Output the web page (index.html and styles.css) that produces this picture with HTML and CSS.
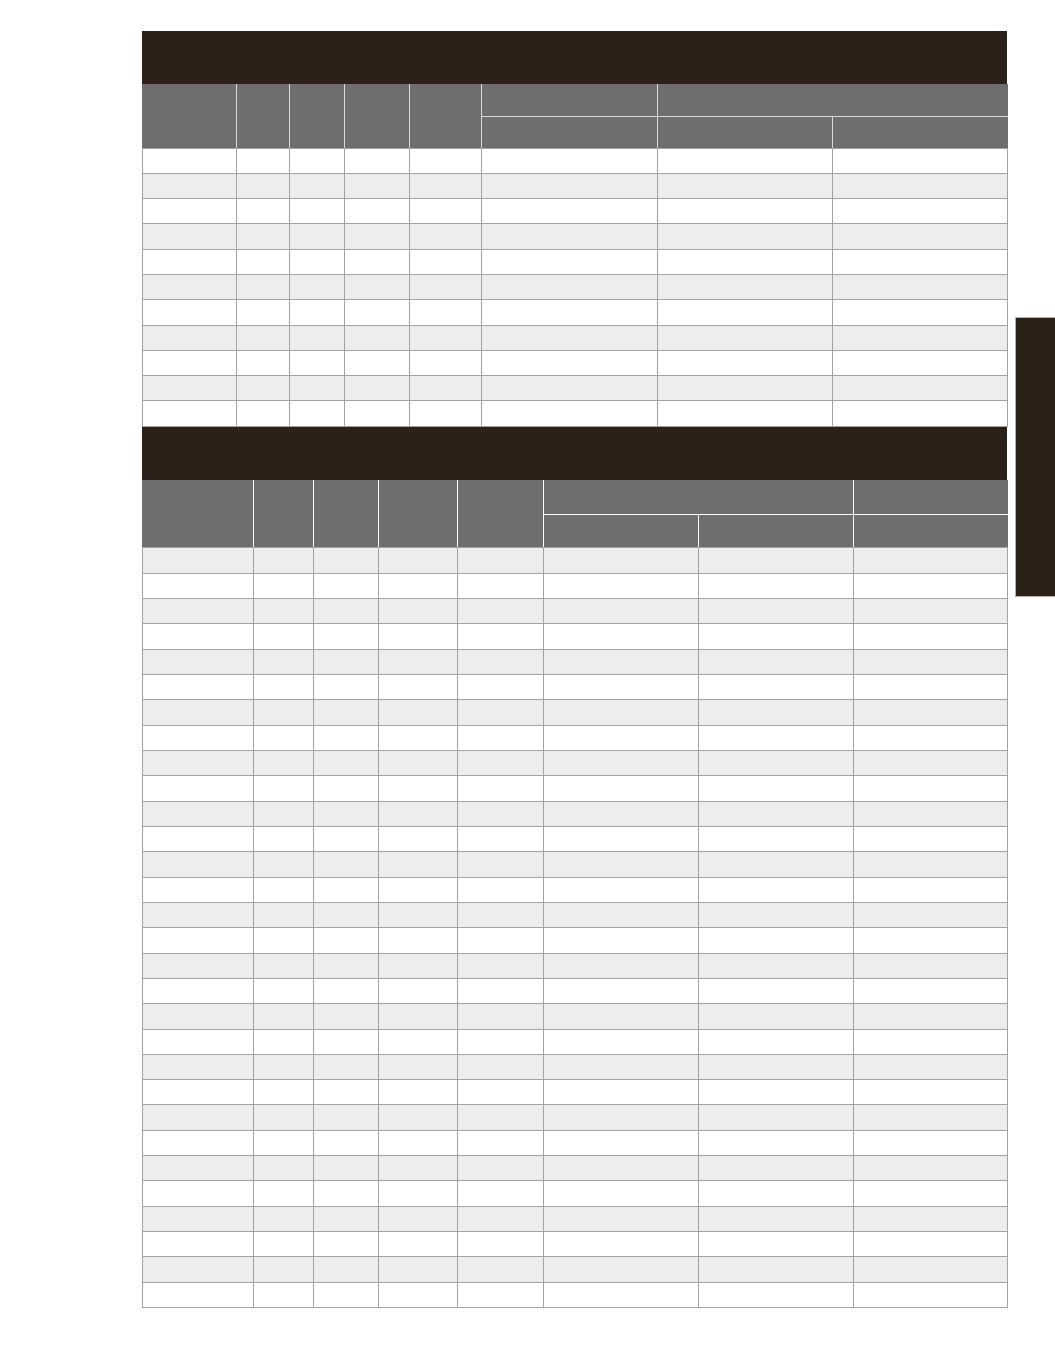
FILE: index.html
```html
<!DOCTYPE html>
<html>
<head>
<meta charset="utf-8">
<link rel="stylesheet" href="styles.css">
</head>
<body>
<div class="page">
  <main class="content">
    <section class="block block-one">
      <div class="band"></div>
      <table class="grid grid-one">
        <colgroup>
          <col class="w94"><col class="w53"><col class="w55"><col class="w65"><col class="w72"><col class="w176"><col class="w175"><col class="w175">
        </colgroup>
        <thead>
          <tr class="h1">
            <th rowspan="2"></th><th rowspan="2"></th><th rowspan="2"></th><th rowspan="2"></th><th rowspan="2"></th>
            <th></th><th colspan="2"></th>
          </tr>
          <tr class="h2">
            <th></th><th></th><th></th>
          </tr>
        </thead>
        <tbody>
          <tr class="plain"><td></td><td></td><td></td><td></td><td></td><td></td><td></td><td></td></tr>
          <tr class="alt"><td></td><td></td><td></td><td></td><td></td><td></td><td></td><td></td></tr>
          <tr class="plain"><td></td><td></td><td></td><td></td><td></td><td></td><td></td><td></td></tr>
          <tr class="alt"><td></td><td></td><td></td><td></td><td></td><td></td><td></td><td></td></tr>
          <tr class="plain"><td></td><td></td><td></td><td></td><td></td><td></td><td></td><td></td></tr>
          <tr class="alt"><td></td><td></td><td></td><td></td><td></td><td></td><td></td><td></td></tr>
          <tr class="plain"><td></td><td></td><td></td><td></td><td></td><td></td><td></td><td></td></tr>
          <tr class="alt"><td></td><td></td><td></td><td></td><td></td><td></td><td></td><td></td></tr>
          <tr class="plain"><td></td><td></td><td></td><td></td><td></td><td></td><td></td><td></td></tr>
          <tr class="alt"><td></td><td></td><td></td><td></td><td></td><td></td><td></td><td></td></tr>
          <tr class="plain"><td></td><td></td><td></td><td></td><td></td><td></td><td></td><td></td></tr>
        </tbody>
      </table>
    </section>
    <section class="block block-two">
      <div class="band band-two"></div>
      <table class="grid grid-two">
        <colgroup>
          <col class="w111"><col class="w60"><col class="w65"><col class="w79"><col class="w85"><col class="w155"><col class="w155"><col class="w154">
        </colgroup>
        <thead>
          <tr class="h1b">
            <th rowspan="2"></th><th rowspan="2"></th><th rowspan="2"></th><th rowspan="2"></th><th rowspan="2"></th>
            <th colspan="2"></th><th></th>
          </tr>
          <tr class="h2b">
            <th></th><th></th><th></th>
          </tr>
        </thead>
        <tbody>
          <tr class="alt"><td></td><td></td><td></td><td></td><td></td><td></td><td></td><td></td></tr>
          <tr class="plain"><td></td><td></td><td></td><td></td><td></td><td></td><td></td><td></td></tr>
          <tr class="alt"><td></td><td></td><td></td><td></td><td></td><td></td><td></td><td></td></tr>
          <tr class="plain"><td></td><td></td><td></td><td></td><td></td><td></td><td></td><td></td></tr>
          <tr class="alt"><td></td><td></td><td></td><td></td><td></td><td></td><td></td><td></td></tr>
          <tr class="plain"><td></td><td></td><td></td><td></td><td></td><td></td><td></td><td></td></tr>
          <tr class="alt"><td></td><td></td><td></td><td></td><td></td><td></td><td></td><td></td></tr>
          <tr class="plain"><td></td><td></td><td></td><td></td><td></td><td></td><td></td><td></td></tr>
          <tr class="alt"><td></td><td></td><td></td><td></td><td></td><td></td><td></td><td></td></tr>
          <tr class="plain"><td></td><td></td><td></td><td></td><td></td><td></td><td></td><td></td></tr>
          <tr class="alt"><td></td><td></td><td></td><td></td><td></td><td></td><td></td><td></td></tr>
          <tr class="plain"><td></td><td></td><td></td><td></td><td></td><td></td><td></td><td></td></tr>
          <tr class="alt"><td></td><td></td><td></td><td></td><td></td><td></td><td></td><td></td></tr>
          <tr class="plain"><td></td><td></td><td></td><td></td><td></td><td></td><td></td><td></td></tr>
          <tr class="alt"><td></td><td></td><td></td><td></td><td></td><td></td><td></td><td></td></tr>
          <tr class="plain"><td></td><td></td><td></td><td></td><td></td><td></td><td></td><td></td></tr>
          <tr class="alt"><td></td><td></td><td></td><td></td><td></td><td></td><td></td><td></td></tr>
          <tr class="plain"><td></td><td></td><td></td><td></td><td></td><td></td><td></td><td></td></tr>
          <tr class="alt"><td></td><td></td><td></td><td></td><td></td><td></td><td></td><td></td></tr>
          <tr class="plain"><td></td><td></td><td></td><td></td><td></td><td></td><td></td><td></td></tr>
          <tr class="alt"><td></td><td></td><td></td><td></td><td></td><td></td><td></td><td></td></tr>
          <tr class="plain"><td></td><td></td><td></td><td></td><td></td><td></td><td></td><td></td></tr>
          <tr class="alt"><td></td><td></td><td></td><td></td><td></td><td></td><td></td><td></td></tr>
          <tr class="plain"><td></td><td></td><td></td><td></td><td></td><td></td><td></td><td></td></tr>
          <tr class="alt"><td></td><td></td><td></td><td></td><td></td><td></td><td></td><td></td></tr>
          <tr class="plain"><td></td><td></td><td></td><td></td><td></td><td></td><td></td><td></td></tr>
          <tr class="alt"><td></td><td></td><td></td><td></td><td></td><td></td><td></td><td></td></tr>
          <tr class="plain"><td></td><td></td><td></td><td></td><td></td><td></td><td></td><td></td></tr>
          <tr class="alt"><td></td><td></td><td></td><td></td><td></td><td></td><td></td><td></td></tr>
          <tr class="plain"><td></td><td></td><td></td><td></td><td></td><td></td><td></td><td></td></tr>
        </tbody>
      </table>
    </section>
  </main>
  <aside class="side-tab"></aside>
</div>
</body>
</html>
```

FILE: styles.css
```css
html, body {
  margin: 0;
  padding: 0;
  background: #ffffff;
  font-family: "Liberation Sans", Arial, sans-serif;
}
.page {
  display: flex;
  align-items: flex-start;
  width: 1055px;
}
.content {
  margin-left: 142px;
  margin-top: 31px;
  width: 865px;
  display: flex;
  flex-direction: column;
}
.band {
  height: 53px;
  background: #2b2119;
}
.band-two {
  height: 53.5px;
}
.grid {
  width: 865px;
  table-layout: fixed;
  border-collapse: collapse;
  border-spacing: 0;
}
.grid th {
  background: #6f6d70;
  padding: 0;
  border: 1px solid #d9d9d9;
}
.grid-two th {
  border-color: #ffffff;
}
.grid thead tr:first-child th {
  border-top: none;
}
.grid th:first-child {
  border-left-color: #6f6d70;
}
.grid tr.h1 th:last-child,
.grid tr.h2 th:last-child,
.grid tr.h1b th:last-child,
.grid tr.h2b th:last-child {
  border-right-color: #6f6d70;
}
.grid tr.h2 th,
.grid tr.h2b th {
  border-bottom-color: #a3a3a3;
}
.grid tr.h1 th[rowspan],
.grid tr.h1b th[rowspan] {
  border-bottom-color: #a3a3a3;
}
.h1, .h2 { height: 32px; }
.h1b { height: 34px; }
.h2b { height: 33.5px; }
.grid td {
  padding: 0;
  border: 1px solid #a3a3a3;
}
.grid tbody tr {
  height: 25.3px;
}
.grid-two tbody tr {
  height: 25.33px;
}
.grid tr.plain td { background: #ffffff; }
.grid tr.alt td { background: #ededed; }

.w94 { width: 94px; }
.w53 { width: 53px; }
.w55 { width: 55px; }
.w65 { width: 65px; }
.w72 { width: 72px; }
.w176 { width: 176px; }
.w175 { width: 175px; }
.w111 { width: 111px; }
.w60 { width: 60px; }
.w79 { width: 79px; }
.w85 { width: 85.5px; }
.w155 { width: 155px; }
.w154 { width: 154.5px; }

.side-tab {
  margin-top: 317px;
  margin-left: 8px;
  flex: 1;
  height: 278px;
  background: #2b2119;
  border: 1px solid #b0b0b0;
  border-right: none;
}
```
